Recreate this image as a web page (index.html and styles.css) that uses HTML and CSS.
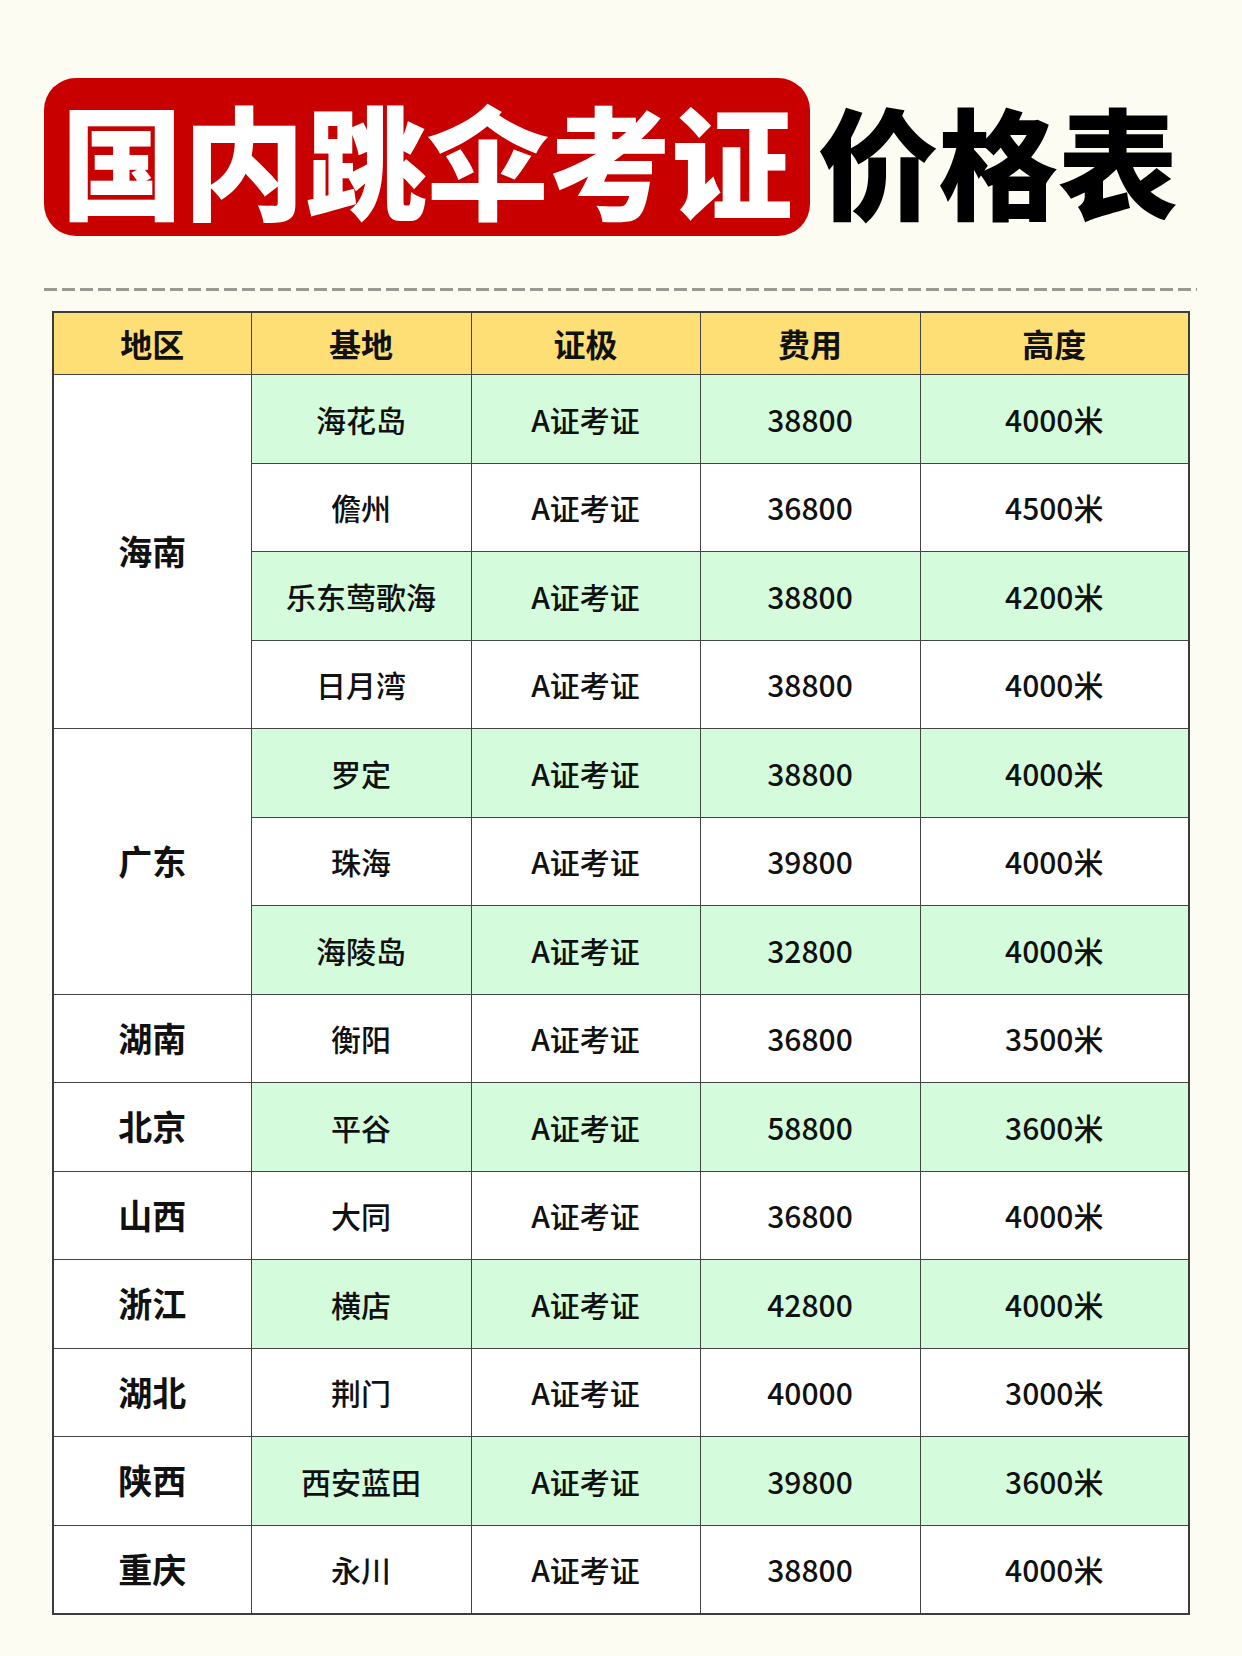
FILE: index.html
```html
<!DOCTYPE html>
<html lang="zh-CN">
<head>
<meta charset="utf-8">
<title>国内跳伞考证价格表</title>
<link rel="stylesheet" href="styles.css">
</head>
<body>
<div class="page">
  <header class="title">
    <div class="title-box">国内跳伞考证</div>
    <div class="title-rest">价格表</div>
  </header>
  <div class="dash"></div>
  <table class="price">
    <colgroup>
      <col class="c1"><col class="c2"><col class="c3"><col class="c4"><col class="c5">
    </colgroup>
    <thead>
      <tr><th>地区</th><th>基地</th><th>证极</th><th>费用</th><th>高度</th></tr>
    </thead>
    <tbody>
      <tr class="g"><td class="region" rowspan="4">海南</td><td>海花岛</td><td>A证考证</td><td>38800</td><td>4000米</td></tr>
      <tr><td>儋州</td><td>A证考证</td><td>36800</td><td>4500米</td></tr>
      <tr class="g"><td>乐东莺歌海</td><td>A证考证</td><td>38800</td><td>4200米</td></tr>
      <tr><td>日月湾</td><td>A证考证</td><td>38800</td><td>4000米</td></tr>
      <tr class="g"><td class="region" rowspan="3">广东</td><td>罗定</td><td>A证考证</td><td>38800</td><td>4000米</td></tr>
      <tr><td>珠海</td><td>A证考证</td><td>39800</td><td>4000米</td></tr>
      <tr class="g"><td>海陵岛</td><td>A证考证</td><td>32800</td><td>4000米</td></tr>
      <tr><td class="region">湖南</td><td>衡阳</td><td>A证考证</td><td>36800</td><td>3500米</td></tr>
      <tr class="g"><td class="region">北京</td><td>平谷</td><td>A证考证</td><td>58800</td><td>3600米</td></tr>
      <tr><td class="region">山西</td><td>大同</td><td>A证考证</td><td>36800</td><td>4000米</td></tr>
      <tr class="g"><td class="region">浙江</td><td>横店</td><td>A证考证</td><td>42800</td><td>4000米</td></tr>
      <tr><td class="region">湖北</td><td>荆门</td><td>A证考证</td><td>40000</td><td>3000米</td></tr>
      <tr class="g"><td class="region">陕西</td><td>西安蓝田</td><td>A证考证</td><td>39800</td><td>3600米</td></tr>
      <tr><td class="region">重庆</td><td>永川</td><td>A证考证</td><td>38800</td><td>4000米</td></tr>
    </tbody>
  </table>
</div>
</body>
</html>
```
FILE: styles.css
```css
html, body {
  margin: 0;
  padding: 0;
  background: #fcfcf3;
}
body {
  font-family: "Noto Sans CJK SC", "Noto Sans", sans-serif;
  color: #111;
}
.page {
  width: 1242px;
  height: 1656px;
  padding-top: 78px;
  box-sizing: border-box;
}
.title {
  display: flex;
  align-items: center;
  margin-left: 44px;
  gap: 8px;
}
.title-box {
  background: #c80000;
  color: #fff;
  border-radius: 32px;
  height: 158px;
  width: 766px;
  box-sizing: border-box;
  display: flex;
  align-items: center;
  justify-content: center;
  font-size: 122px;
  font-weight: 900;
  line-height: 1;
}
.title-rest {
  font-size: 120px;
  font-weight: 900;
  line-height: 1;
  color: #000;
  margin-top: 4px;
}
.dash {
  margin: 52px 0 0 44px;
  width: 1153px;
  height: 3px;
  background: repeating-linear-gradient(to right, #9a9a94 0 13px, transparent 13px 18px);
}
.price {
  margin: 20px 0 0 52px;
  width: 1136px;
  border-collapse: collapse;
  table-layout: fixed;
  border: 2px solid #3c3c3c;
}
.c1 { width: 198px; }
.c2 { width: 220px; }
.c3 { width: 229px; }
.c4 { width: 220px; }
.c5 { width: 269px; }
.price th, .price td {
  border: 1.5px solid #444;
  text-align: center;
  vertical-align: middle;
  padding: 0;
  line-height: 1.2;
}
.price th {
  background: #fddf76;
  height: 61px;
  font-size: 32px;
  font-weight: 700;
}
.price td {
  background: #fff;
  height: 87.5px;
  font-size: 30px;
  font-weight: 500;
}
.price tr.g td {
  background: #d4fbdb;
}
.price tr td.region {
  background: #fff;
  font-size: 34px;
  font-weight: 700;
}
```
